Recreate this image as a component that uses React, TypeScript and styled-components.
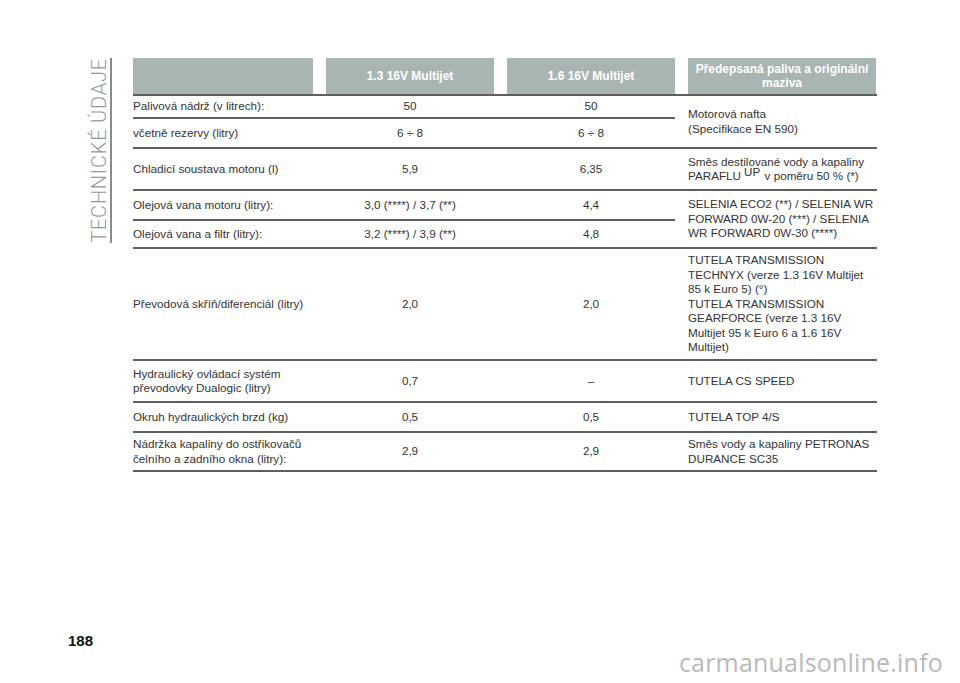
import React from "react";
import styled, { createGlobalStyle } from "styled-components";

const Global = createGlobalStyle`
  html, body { margin: 0; padding: 0; background: #fff; }
  body { font-family: "Liberation Sans", Arial, sans-serif; color: #333; }
`;

const Page = styled.div`
  position: relative;
  height: 683px;
  width: 960px;
  display: flex;
  flex-direction: row;
  padding-top: 58px;
  box-sizing: border-box;
  overflow: hidden;
`;

const Sidebar = styled.div`
  width: 133px;
  flex: none;
  display: flex;
  flex-direction: column;
  justify-content: space-between;
`;

const TitleWrap = styled.div`
  display: flex;
  flex-direction: row;
  align-items: stretch;
  margin-left: 89px;
`;

const Title = styled.div`
  writing-mode: vertical-rl;
  transform: rotate(180deg);
  font-family: Roboto, "Liberation Sans", sans-serif;
  font-weight: 300;
  font-size: 20px;
  line-height: 20px;
  letter-spacing: 0.8px;
  color: #8f9b99;
  white-space: nowrap;
`;

const Rule = styled.div`
  width: 1.5px;
  margin-left: 1px;
  background: #8a8a8a;
`;

const PageNumber = styled.div`
  margin-left: 68px;
  margin-bottom: 33px;
  font-weight: 700;
  font-size: 15px;
  line-height: 18px;
  color: #111;
`;

const Table = styled.div`
  width: 744px;
  display: flex;
  flex-direction: column;
  font-size: 11.7px;
  line-height: 14.5px;
`;

const COLS = "180px 168px 168px 188px";
const LEFT_COLS = "180px 168px 168px";
const GAP = "13px";

const HeaderRow = styled.div`
  display: grid;
  grid-template-columns: ${COLS};
  column-gap: ${GAP};
  height: 36px;
  border-bottom: 2px solid #5e5e5e;
`;

const HeaderCell = styled.div`
  background: #a8b5b3;
  color: #fff;
  font-weight: 700;
  font-size: 12px;
  line-height: 14px;
  display: flex;
  align-items: center;
  justify-content: center;
  text-align: center;
`;

const Group = styled.div<{ $h: number }>`
  display: grid;
  grid-template-columns: 542px 188px;
  column-gap: ${GAP};
  min-height: ${(p) => p.$h}px;
  border-bottom: 2px solid #5e5e5e;
`;

const Left = styled.div`
  display: flex;
  flex-direction: column;
`;

const SubRow = styled.div<{ $h: number; $line?: boolean }>`
  display: grid;
  grid-template-columns: ${LEFT_COLS};
  column-gap: ${GAP};
  align-items: center;
  flex: 1 0 auto;
  min-height: ${(p) => p.$h}px;
  border-bottom: ${(p) => (p.$line ? "2px solid #5e5e5e" : "none")};
`;

const Label = styled.div`
  text-align: left;
`;

const Value = styled.div`
  text-align: center;
`;

const Spec = styled.div`
  display: flex;
  align-items: center;
  padding: 4px 0;
`;

const SpecText = styled.div`
  text-align: left;
`;

const Sup = styled.sup`
  font-size: 11.7px;
  line-height: 0;
  vertical-align: 4px;
  margin-left: 3px;
  margin-right: 1px;
`;

const Watermark = styled.div`
  position: absolute;
  right: 17px;
  bottom: 6px;
  font-family: "Open Sans", "Liberation Sans", sans-serif;
  font-size: 25px;
  line-height: 30px;
  color: #b9b9b9;
  letter-spacing: 0.2px;
`;

type Sub = { label: React.ReactNode; a: string; b: string; h: number };
type G = { h: number; rows: Sub[]; spec: React.ReactNode };

const groups: G[] = [
  {
    h: 51,
    rows: [
      { label: "Palivová nádrž (v litrech):", a: "50", b: "50", h: 21 },
      { label: "včetně rezervy (litry)", a: "6 ÷ 8", b: "6 ÷ 8", h: 28 },
    ],
    spec: (
      <>
        Motorová nafta
        <br />
        (Specifikace EN 590)
      </>
    ),
  },
  {
    h: 40,
    rows: [{ label: "Chladicí soustava motoru (l)", a: "5,9", b: "6,35", h: 40 }],
    spec: (
      <>
        Směs destilované vody a kapaliny
        <br />
        PARAFLU<Sup>UP</Sup> v poměru 50 % (*)
      </>
    ),
  },
  {
    h: 56,
    rows: [
      { label: "Olejová vana motoru (litry):", a: "3,0 (****) / 3,7 (**)", b: "4,4", h: 28 },
      { label: "Olejová vana a filtr (litry):", a: "3,2 (****) / 3,9 (**)", b: "4,8", h: 26 },
    ],
    spec: (
      <>
        SELENIA ECO2 (**) / SELENIA WR
        <br />
        FORWARD 0W-20 (***) / SELENIA
        <br />
        WR FORWARD 0W-30 (****)
      </>
    ),
  },
  {
    h: 110,
    rows: [{ label: "Převodová skříň/diferenciál (litry)", a: "2,0", b: "2,0", h: 110 }],
    spec: (
      <>
        TUTELA TRANSMISSION
        <br />
        TECHNYX (verze 1.3 16V Multijet
        <br />
        85 k Euro 5) (°)
        <br />
        TUTELA TRANSMISSION
        <br />
        GEARFORCE (verze 1.3 16V
        <br />
        Multijet 95 k Euro 6 a 1.6 16V
        <br />
        Multijet)
      </>
    ),
  },
  {
    h: 40,
    rows: [
      {
        label: (
          <>
            Hydraulický ovládací systém
            <br />
            převodovky Dualogic (litry)
          </>
        ),
        a: "0,7",
        b: "–",
        h: 40,
      },
    ],
    spec: <>TUTELA CS SPEED</>,
  },
  {
    h: 28,
    rows: [{ label: "Okruh hydraulických brzd (kg)", a: "0,5", b: "0,5", h: 28 }],
    spec: <>TUTELA TOP 4/S</>,
  },
  {
    h: 36,
    rows: [
      {
        label: (
          <>
            Nádržka kapaliny do ostřikovačů
            <br />
            čelního a zadního okna (litry):
          </>
        ),
        a: "2,9",
        b: "2,9",
        h: 36,
      },
    ],
    spec: (
      <>
        Směs vody a kapaliny PETRONAS
        <br />
        DURANCE SC35
      </>
    ),
  },
];

export default function App() {
  return (
    <>
      <Global />
      <Page>
        <Sidebar>
          <TitleWrap>
            <Title>TECHNICKÉ ÚDAJE</Title>
            <Rule />
          </TitleWrap>
          <PageNumber>188</PageNumber>
        </Sidebar>
        <Table>
          <HeaderRow>
            <HeaderCell />
            <HeaderCell>1.3 16V Multijet</HeaderCell>
            <HeaderCell>1.6 16V Multijet</HeaderCell>
            <HeaderCell>
              Předepsaná paliva a originální
              <br />
              maziva
            </HeaderCell>
          </HeaderRow>
          {groups.map((g, i) => (
            <Group key={i} $h={g.h}>
              <Left>
                {g.rows.map((r, j) => (
                  <SubRow key={j} $h={r.h} $line={j < g.rows.length - 1}>
                    <Label>{r.label}</Label>
                    <Value>{r.a}</Value>
                    <Value>{r.b}</Value>
                  </SubRow>
                ))}
              </Left>
              <Spec>
                <SpecText>{g.spec}</SpecText>
              </Spec>
            </Group>
          ))}
        </Table>
        <Watermark>carmanualsonline.info</Watermark>
      </Page>
    </>
  );
}
